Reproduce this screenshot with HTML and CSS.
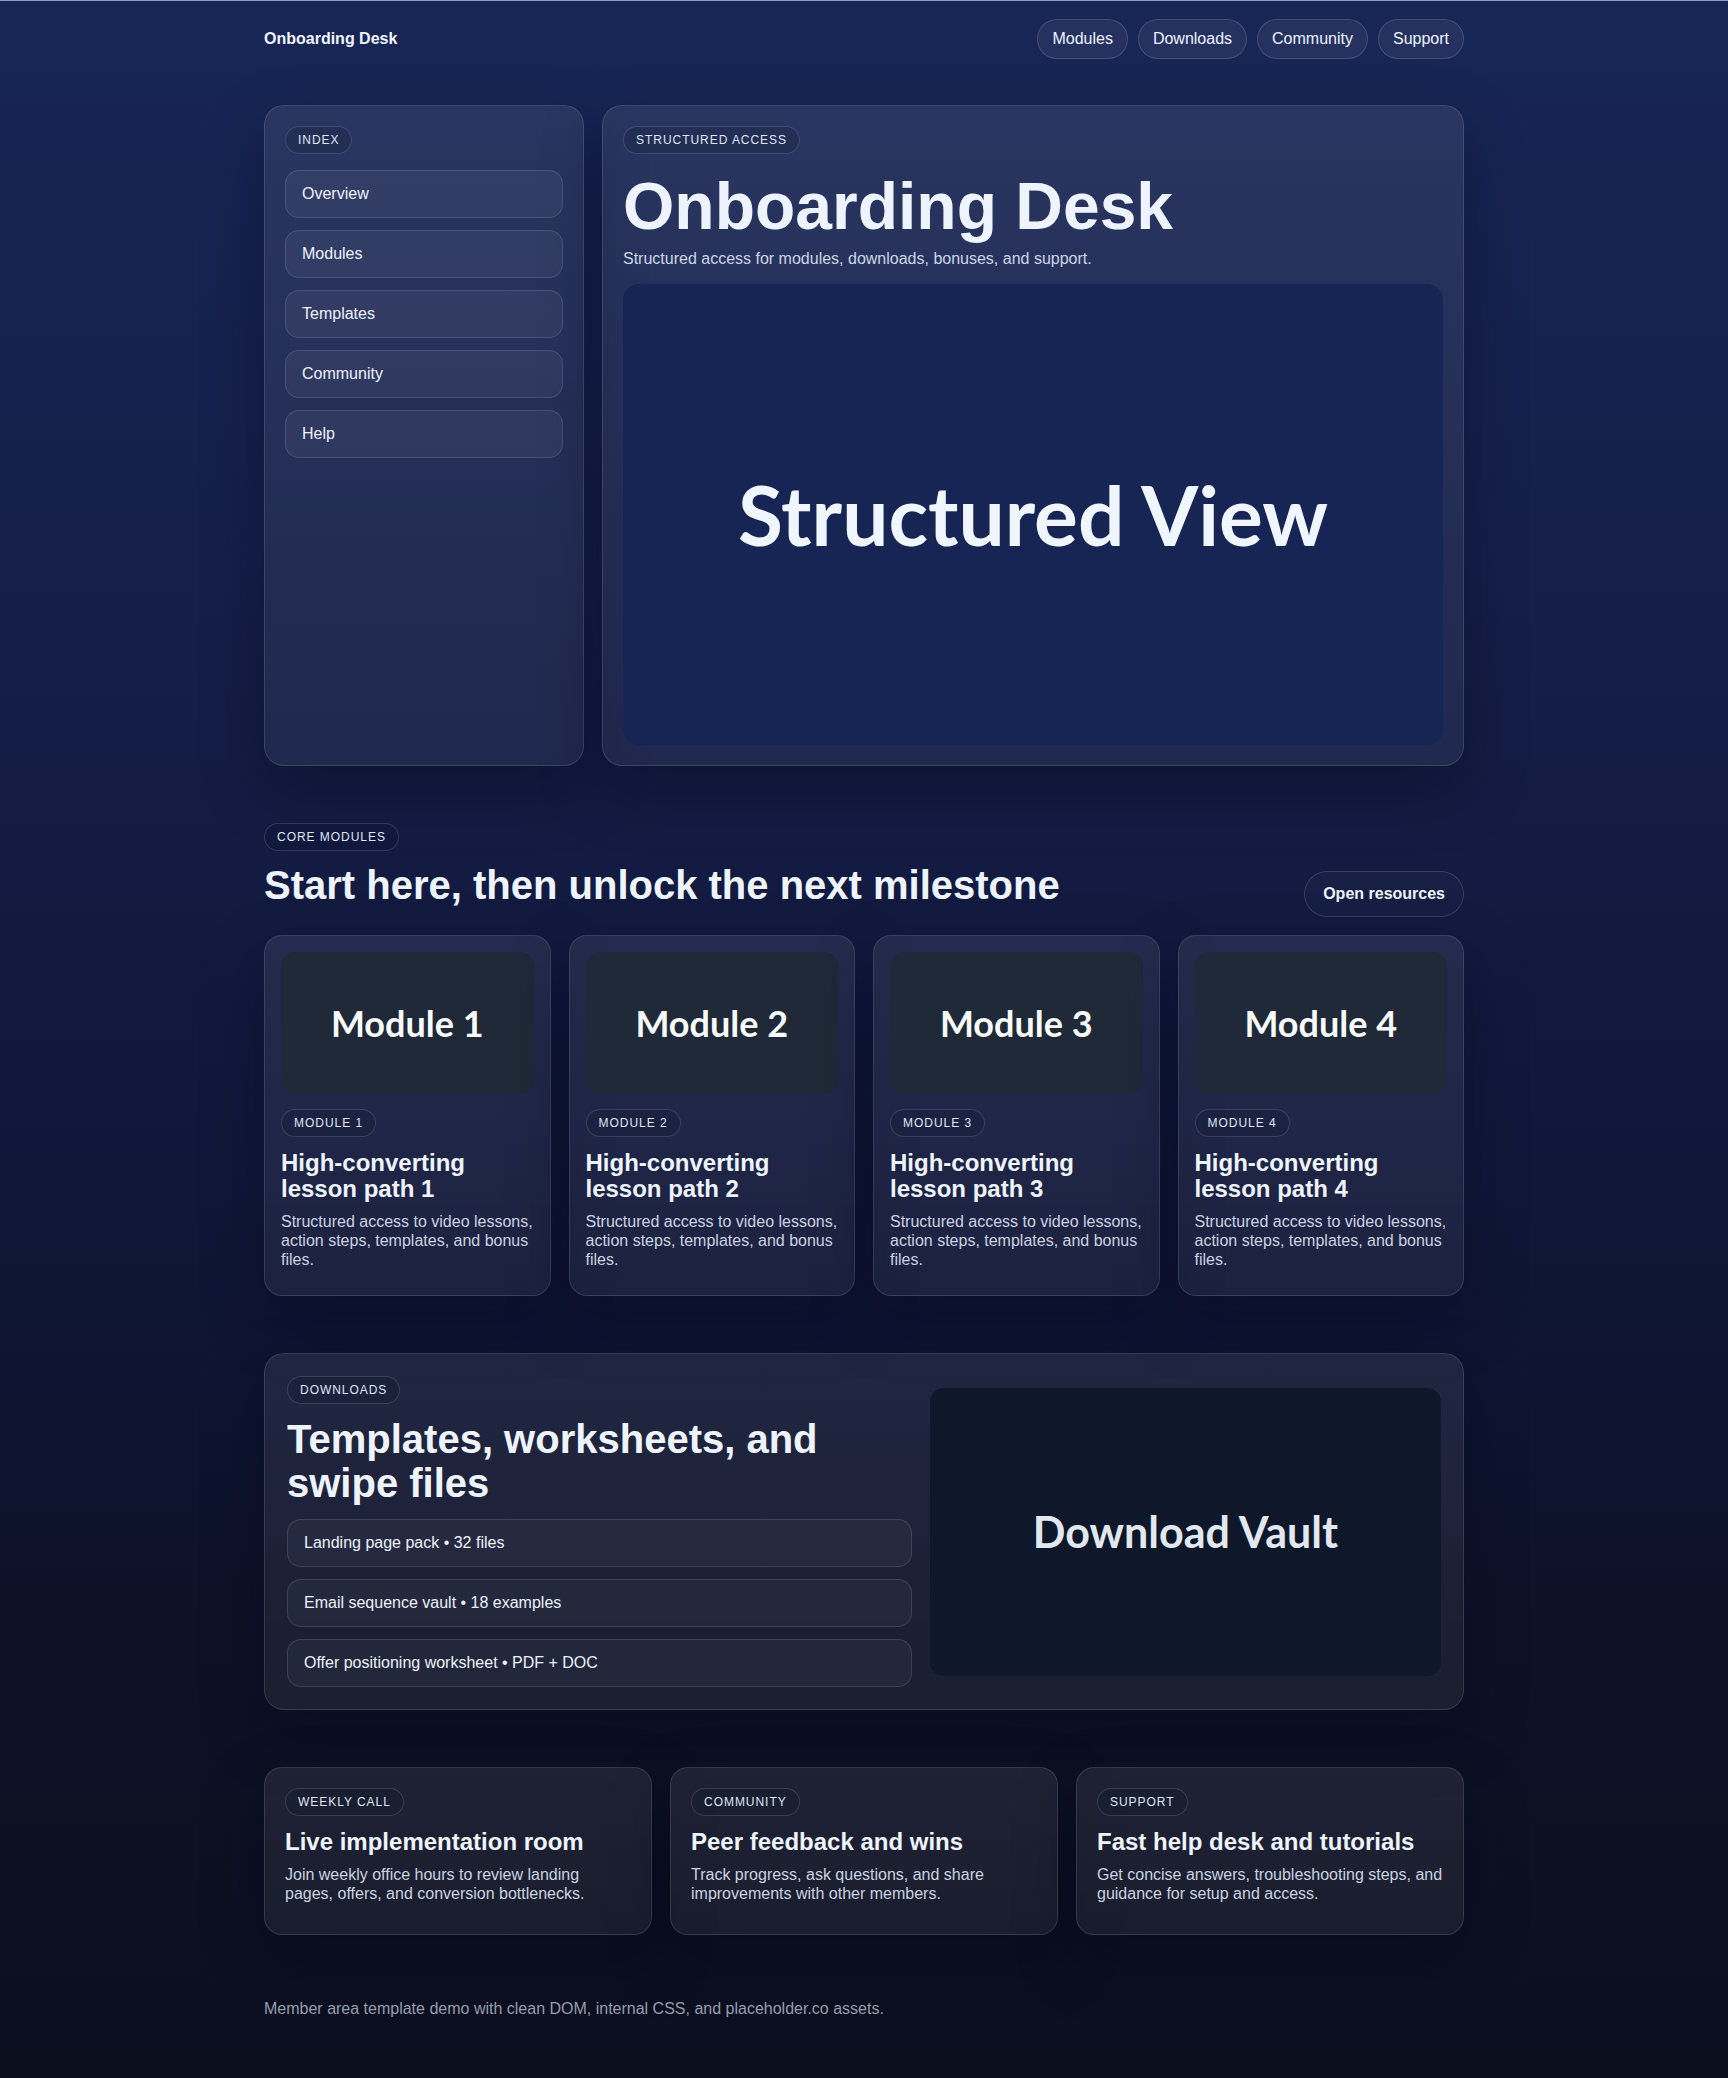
FILE: index.html
```html
<!DOCTYPE html>
<html lang="en">
<head>
<meta charset="utf-8">
<title>Onboarding Desk</title>
<link rel="stylesheet" href="styles.css">
</head>
<body>
<div class="page">
  <header class="topbar">
    <div class="brand">Onboarding Desk</div>
    <nav class="topnav">
      <a class="chip" href="#">Modules</a>
      <a class="chip" href="#">Downloads</a>
      <a class="chip" href="#">Community</a>
      <a class="chip" href="#">Support</a>
    </nav>
  </header>

  <main class="content">
    <section class="hero">
      <aside class="card sidebar">
        <span class="tag">Index</span>
        <ul class="side-list">
          <li class="side-item">Overview</li>
          <li class="side-item">Modules</li>
          <li class="side-item">Templates</li>
          <li class="side-item">Community</li>
          <li class="side-item">Help</li>
        </ul>
      </aside>
      <div class="card hero-main">
        <span class="tag">Structured access</span>
        <h1 class="hero-title">Onboarding Desk</h1>
        <p class="hero-sub">Structured access for modules, downloads, bonuses, and support.</p>
        <div class="ph ph-hero">Structured View</div>
      </div>
    </section>

    <section class="modules">
      <div class="section-head">
        <div class="section-head-text">
          <span class="tag">Core modules</span>
          <h2 class="section-title">Start here, then unlock the next milestone</h2>
        </div>
        <a class="btn" href="#">Open resources</a>
      </div>
      <div class="module-grid">
        <article class="card module-card">
          <div class="ph ph-module">Module 1</div>
          <span class="tag">Module 1</span>
          <h3 class="card-title">High-converting lesson path 1</h3>
          <p class="card-text">Structured access to video lessons, action steps, templates, and bonus files.</p>
        </article>
        <article class="card module-card">
          <div class="ph ph-module">Module 2</div>
          <span class="tag">Module 2</span>
          <h3 class="card-title">High-converting lesson path 2</h3>
          <p class="card-text">Structured access to video lessons, action steps, templates, and bonus files.</p>
        </article>
        <article class="card module-card">
          <div class="ph ph-module">Module 3</div>
          <span class="tag">Module 3</span>
          <h3 class="card-title">High-converting lesson path 3</h3>
          <p class="card-text">Structured access to video lessons, action steps, templates, and bonus files.</p>
        </article>
        <article class="card module-card">
          <div class="ph ph-module">Module 4</div>
          <span class="tag">Module 4</span>
          <h3 class="card-title">High-converting lesson path 4</h3>
          <p class="card-text">Structured access to video lessons, action steps, templates, and bonus files.</p>
        </article>
      </div>
    </section>

    <section class="card downloads">
      <div class="dl-left">
        <span class="tag">Downloads</span>
        <h2 class="dl-title">Templates, worksheets, and swipe files</h2>
        <ul class="dl-list">
          <li class="dl-item">Landing page pack • 32 files</li>
          <li class="dl-item">Email sequence vault • 18 examples</li>
          <li class="dl-item">Offer positioning worksheet • PDF + DOC</li>
        </ul>
      </div>
      <div class="ph ph-vault">Download Vault</div>
    </section>

    <section class="extras">
      <article class="card extra-card">
        <span class="tag">Weekly call</span>
        <h3 class="card-title">Live implementation room</h3>
        <p class="card-text">Join weekly office hours to review landing pages, offers, and conversion bottlenecks.</p>
      </article>
      <article class="card extra-card">
        <span class="tag">Community</span>
        <h3 class="card-title">Peer feedback and wins</h3>
        <p class="card-text">Track progress, ask questions, and share improvements with other members.</p>
      </article>
      <article class="card extra-card">
        <span class="tag">Support</span>
        <h3 class="card-title">Fast help desk and tutorials</h3>
        <p class="card-text">Get concise answers, troubleshooting steps, and guidance for setup and access.</p>
      </article>
    </section>
  </main>

  <footer class="footer">Member area template demo with clean DOM, internal CSS, and placeholder.co assets.</footer>
</div>
</body>
</html>
```

FILE: styles.css
```css
* {
  box-sizing: border-box;
}

html {
  background: #0b0f1e;
}

body {
  margin: 0;
  min-height: 100vh;
  font-family: "Liberation Sans", Arial, Helvetica, sans-serif;
  color: #eef4ff;
  background: linear-gradient(180deg, #182656 0%, #141d45 35%, #10173a 55%, #0d1228 78%, #0b0f1e 100%);
  border-top: 1px solid #8e9cc4;
}

.page {
  max-width: 1200px;
  margin: 0 auto;
  padding-top: 18px;
}

/* Top bar */
.topbar {
  display: flex;
  justify-content: space-between;
  align-items: center;
  height: 40px;
}

.brand {
  font-weight: 700;
  font-size: 16px;
  color: #f1f5ff;
}

.topnav {
  display: flex;
  gap: 10px;
}

.chip {
  display: inline-flex;
  align-items: center;
  height: 40px;
  padding: 0 14px;
  border-radius: 999px;
  border: 1px solid rgba(255, 255, 255, 0.14);
  background: rgba(255, 255, 255, 0.06);
  color: #eef2ff;
  font-size: 16px;
  text-decoration: none;
}

/* Layout */
.content {
  display: flex;
  flex-direction: column;
  gap: 57px;
  margin-top: 46px;
}

.card {
  border: 1px solid rgba(255, 255, 255, 0.12);
  border-radius: 20px;
  background: linear-gradient(180deg, rgba(255, 255, 255, 0.08), rgba(255, 255, 255, 0.055));
  box-shadow: 0 24px 60px rgba(2, 6, 23, 0.35);
}

.tag {
  display: inline-block;
  padding: 6px 12px;
  font-size: 12px;
  line-height: 14px;
  letter-spacing: 0.08em;
  text-transform: uppercase;
  color: #dfe6f5;
  border: 1px solid rgba(255, 255, 255, 0.14);
  border-radius: 999px;
  background: rgba(10, 16, 40, 0.18);
}

/* Placeholder images */
.ph {
  align-self: stretch;
  display: flex;
  align-items: center;
  justify-content: center;
  aspect-ratio: 16 / 9;
  font-family: Lato, "Liberation Sans", sans-serif;
  font-weight: 700;
  white-space: nowrap;
}

.ph-hero {
  margin-top: 13px;
  background: #172554;
  color: #eff6ff;
  font-size: 82px;
  border-radius: 16px;
}

.ph-module {
  background: #1f2937;
  color: #f8fafc;
  font-size: 36px;
  border-radius: 14px;
}

.ph-vault {
  align-self: center;
  background: #0f172a;
  color: #e2e8f0;
  font-size: 43px;
  border-radius: 14px;
}

/* Hero */
.hero {
  display: grid;
  grid-template-columns: 320px 1fr;
  gap: 18px;
}

.sidebar,
.hero-main {
  padding: 20px;
  display: flex;
  flex-direction: column;
  align-items: flex-start;
}

.side-list {
  list-style: none;
  margin: 16px 0 0;
  padding: 0;
  align-self: stretch;
  display: flex;
  flex-direction: column;
  gap: 12px;
}

.side-item {
  height: 48px;
  display: flex;
  align-items: center;
  padding: 0 16px;
  border-radius: 14px;
  border: 1px solid rgba(255, 255, 255, 0.12);
  background: rgba(255, 255, 255, 0.05);
  font-size: 16px;
  color: #eef2ff;
}

.hero-title {
  margin: 18px 0 6px;
  font-size: 66px;
  line-height: 1.04;
  font-weight: 700;
  color: #eef4ff;
}

.hero-sub {
  margin: 0;
  font-size: 16px;
  line-height: 24px;
  color: #cdd6e6;
}

/* Modules */
.section-head {
  display: flex;
  justify-content: space-between;
  align-items: flex-end;
}

.section-head-text {
  display: flex;
  flex-direction: column;
  align-items: flex-start;
}

.section-title {
  margin: 12px 0 10px;
  font-size: 40px;
  line-height: 1.1;
  font-weight: 700;
  color: #eef4ff;
}

.btn {
  display: inline-block;
  padding: 12px 18px;
  font-size: 16px;
  line-height: 20px;
  font-weight: 700;
  color: #eef4ff;
  text-decoration: none;
  border: 1px solid rgba(255, 255, 255, 0.14);
  border-radius: 999px;
  background: rgba(255, 255, 255, 0.02);
}

.module-grid {
  display: grid;
  grid-template-columns: repeat(4, 1fr);
  gap: 18px;
  margin-top: 18px;
}

.module-card {
  padding: 16px;
  border-radius: 18px;
  display: flex;
  flex-direction: column;
  align-items: flex-start;
}

.module-card .tag {
  margin-top: 15px;
}

.card-title {
  margin: 13px 0 0;
  font-size: 24px;
  line-height: 1.1;
  font-weight: 700;
  color: #eef4ff;
}

.card-text {
  margin: 9px 0 10px;
  font-size: 16px;
  line-height: 1.2;
  color: #cbd3e2;
}

/* Downloads */
.downloads {
  display: grid;
  grid-template-columns: minmax(0, 1.1fr) minmax(0, 0.9fr);
  gap: 18px;
  align-items: center;
  padding: 22px;
}

.dl-left {
  display: flex;
  flex-direction: column;
  align-items: flex-start;
}

.dl-title {
  margin: 13px 0 0;
  font-size: 40px;
  line-height: 1.1;
  font-weight: 700;
  color: #eef4ff;
}

.dl-list {
  list-style: none;
  margin: 14px 0 0;
  padding: 0;
  align-self: stretch;
  display: flex;
  flex-direction: column;
  gap: 12px;
}

.dl-item {
  height: 48px;
  display: flex;
  align-items: center;
  padding: 0 16px;
  border-radius: 14px;
  border: 1px solid rgba(255, 255, 255, 0.12);
  background: rgba(255, 255, 255, 0.04);
  font-size: 16px;
  color: #eef2ff;
}

/* Extras */
.extras {
  display: grid;
  grid-template-columns: repeat(3, 1fr);
  gap: 18px;
}

.extra-card {
  padding: 20px;
  border-radius: 18px;
  display: flex;
  flex-direction: column;
  align-items: flex-start;
}

.extra-card .card-text {
  margin-bottom: 11px;
}

/* Footer */
.footer {
  margin-top: 65px;
  padding-bottom: 60px;
  font-size: 16px;
  color: #959db0;
}
```
